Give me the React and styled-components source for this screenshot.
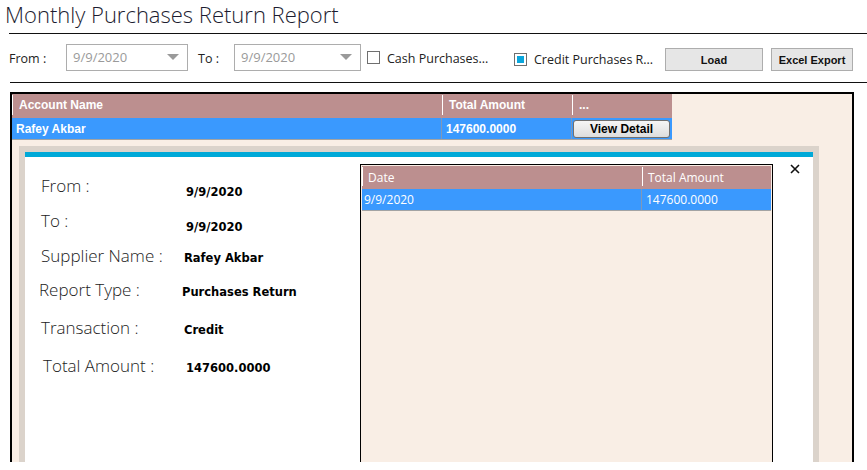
import React from "react";
import styled, { createGlobalStyle } from "styled-components";

const Global = createGlobalStyle`
  html, body { margin: 0; padding: 0; background: #fff; overflow: hidden; }
  body { width: 867px; height: 470px; }
`;

const Page = styled.div`
  width: 867px;
  height: 470px;
  overflow: hidden;
  font-family: "Open Sans", "Noto Sans", sans-serif;
  color: #222;
`;

const Title = styled.h1`
  margin: 0;
  padding: 0 0 0 5px;
  height: 33px;
  line-height: 28px;
  font-family: "Open Sans", sans-serif;
  font-weight: 300;
  font-size: 22px;
  color: #1c1c30;
  white-space: nowrap;
`;

const Rule = styled.div`
  margin-left: ${(p) => p.$left}px;
  border-top: 1px solid #111;
`;

const Toolbar = styled.div`
  height: 48px;
  display: flex;
  align-items: center;
  padding-left: 9px;
  font-size: 12.5px;
  color: #222;
`;

const FieldLabel = styled.span`
  width: ${(p) => p.$w}px;
  margin-left: ${(p) => p.$ml || 0}px;
  white-space: nowrap;
  margin-top: 1px;
`;

const DateBox = styled.div`
  width: ${(p) => p.$w}px;
  height: 27px;
  box-sizing: border-box;
  border: 1px solid #adadad;
  background: #fff;
  display: flex;
  align-items: center;
  justify-content: space-between;
  padding: 0 8px 0 6px;
  color: #9a9a9a;
  font-size: 13px;
  margin-top: -2px;
`;

const Arrow = styled.span`
  width: 0;
  height: 0;
  border-left: 6px solid transparent;
  border-right: 6px solid transparent;
  border-top: 6px solid #9a9a9a;
`;

const Check = styled.span`
  width: 13px;
  height: 13px;
  box-sizing: border-box;
  border: 1px solid #6f6f6f;
  background: #fff;
  margin-left: ${(p) => p.$ml}px;
  margin-right: 7px;
  padding: 2px;
  margin-top: ${(p) => p.$mt || 0}px;
  display: flex;
`;

const CheckFill = styled.span`
  flex: 1;
  background: #0aa6dc;
`;

const CheckLabel = styled.span`
  width: ${(p) => p.$w}px;
  white-space: nowrap;
  overflow: hidden;
  margin-top: ${(p) => p.$mt || 0}px;
`;

const ToolButton = styled.button`
  width: ${(p) => p.$w}px;
  height: 23px;
  margin-left: ${(p) => p.$ml || 0}px;
  margin-top: 3px;
  border: 1px solid #adadad;
  background: #e6e6e6;
  font-family: "Liberation Sans", Arial, sans-serif;
  font-weight: bold;
  font-size: 11px;
  color: #111;
  padding: 0;
`;

const Panel = styled.div`
  margin: 9px 0 0 10px;
  width: 844px;
  height: 370px;
  box-sizing: border-box;
  border: 2px solid #000;
  border-bottom: none;
  background: #f9eee5;
  overflow: hidden;
`;

const Grid = styled.div`
  width: 660px;
  font-family: "Liberation Sans", Arial, sans-serif;
  font-size: 12px;
  font-weight: bold;
  color: #fff;
`;

const GridRow = styled.div`
  display: grid;
  grid-template-columns: ${(p) => p.$cols};
  height: ${(p) => p.$h}px;
  background: ${(p) => p.$bg};
  border-bottom: ${(p) => (p.$line ? "1px solid #a3a3a3" : "none")};
  box-sizing: border-box;
`;

const HeadCell = styled.div`
  border-left: 1px solid #fff;
  padding: ${(p) => (p.$light ? "2px 0 0 5px" : "3px 0 0 6px")};
  margin: 1px 0 3px;
  white-space: nowrap;
  font-weight: ${(p) => (p.$light ? "normal" : "bold")};
`;

const Cell = styled.div`
  display: flex;
  align-items: center;
  padding-left: ${(p) => p.$pl}px;
  border-right: ${(p) => (p.$sep ? "1px solid #7f98b8" : "none")};
  white-space: nowrap;
  font-weight: ${(p) => (p.$light ? "normal" : "bold")};
`;

const DetailButton = styled.button`
  width: 97px;
  height: 18px;
  margin-top: 1px;
  border: 1px solid #707070;
  border-radius: 3px;
  background: linear-gradient(#f6f6f6, #dddddd);
  font-family: "Liberation Sans", Arial, sans-serif;
  font-weight: bold;
  font-size: 12px;
  color: #000;
  padding: 0;
`;

const Popup = styled.div`
  margin: 6px 0 0 7px;
  width: 800px;
  height: 330px;
  box-sizing: border-box;
  border: 6px solid #dbd3cb;
  border-bottom: none;
  background: #fff;
  position: relative;
`;

const CyanBar = styled.div`
  height: 5px;
  background: #00a9d8;
`;

const PopupBody = styled.div`
  display: flex;
`;

const Info = styled.div`
  width: 335px;
  padding-top: 17px;
`;

const InfoRow = styled.div`
  display: flex;
  align-items: flex-start;
  height: ${(p) => p.$h}px;
  padding-left: ${(p) => 16 + (p.$dx || 0)}px;
`;

const InfoLabel = styled.span`
  width: ${(p) => p.$w}px;
  font-family: "Open Sans", sans-serif;
  font-weight: 300;
  font-size: 17px;
  line-height: 23px;
  color: #222;
  white-space: nowrap;
`;

const InfoValue = styled.span`
  margin-top: ${(p) => p.$dy}px;
  font-family: "DejaVu Sans", sans-serif;
  font-weight: bold;
  font-size: 11.5px;
  line-height: 22px;
  color: #000;
  white-space: nowrap;
`;

const SubGrid = styled.div`
  margin-top: 7px;
  width: 413px;
  height: 320px;
  box-sizing: border-box;
  border: 1px solid #000;
  border-bottom: none;
  padding: 1px 1px 0;
  background: #f9eee5;
  font-family: "Open Sans", sans-serif;
  font-size: 12px;
  color: #fff;
`;

const Close = styled.div`
  position: absolute;
  right: 13px;
  top: 5px;
  width: 10px;
  height: 10px;
`;

const info = [
  { label: "From :", value: "9/9/2020", h: 35, dy: 7, dx: 0, vx: 0 },
  { label: "To :", value: "9/9/2020", h: 35, dy: 7, dx: 0, vx: 0 },
  { label: "Supplier Name :", value: "Rafey Akbar", h: 34, dy: 3, dx: 0, vx: -2 },
  { label: "Report Type :", value: "Purchases Return", h: 38, dy: 3, dx: -2, vx: -4 },
  { label: "Transaction :", value: "Credit", h: 38, dy: 3, dx: 0, vx: -2 },
  { label: "Total Amount :", value: "147600.0000", h: 38, dy: 3, dx: 2, vx: 0 },
];

export default function App() {
  return (
    <Page>
      <Global />
      <Title>Monthly Purchases Return Report</Title>
      <Rule $left={9} />
      <Toolbar>
        <FieldLabel $w={57}>From :</FieldLabel>
        <DateBox $w={122}>
          9/9/2020
          <Arrow />
        </DateBox>
        <FieldLabel $w={36} $ml={10}>To :</FieldLabel>
        <DateBox $w={127}>
          9/9/2020
          <Arrow />
        </DateBox>
        <Check $ml={6} $mt={-2} />
        <CheckLabel $w={127}>Cash Purchases...</CheckLabel>
        <Check $ml={0} $mt={2}>
          <CheckFill />
        </Check>
        <CheckLabel $w={131} $mt={3}>Credit Purchases R...</CheckLabel>
        <ToolButton $w={98}>Load</ToolButton>
        <ToolButton $w={82} $ml={8}>Excel Export</ToolButton>
      </Toolbar>
      <Rule $left={10} />
      <Panel>
        <Grid>
          <GridRow $cols="430px 130px 100px" $h={24} $bg="#bc8f8f">
            <HeadCell>Account Name</HeadCell>
            <HeadCell>Total Amount</HeadCell>
            <HeadCell>...</HeadCell>
          </GridRow>
          <GridRow $cols="430px 130px 100px" $h={22} $bg="#3a99fe" $line>
            <Cell $pl={4} $sep>Rafey Akbar</Cell>
            <Cell $pl={4} $sep>147600.0000</Cell>
            <Cell $pl={1}>
              <DetailButton>View Detail</DetailButton>
            </Cell>
          </GridRow>
        </Grid>
        <Popup>
          <CyanBar />
          <Close>
            <svg width="10" height="10" viewBox="0 0 10 10">
              <path d="M1 1 L9 9 M9 1 L1 9" stroke="#111" strokeWidth="1.6" />
            </svg>
          </Close>
          <PopupBody>
            <Info>
              {info.map((r) => (
                <InfoRow key={r.label} $h={r.h} $dx={r.dx}>
                  <InfoLabel $w={145 - r.dx + r.vx}>{r.label}</InfoLabel>
                  <InfoValue $dy={r.dy}>{r.value}</InfoValue>
                </InfoRow>
              ))}
            </Info>
            <SubGrid>
              <GridRow $cols="280px 130px" $h={23} $bg="#bc8f8f">
                <HeadCell $light>Date</HeadCell>
                <HeadCell $light>Total Amount</HeadCell>
              </GridRow>
              <GridRow $cols="280px 129px" $h={22} $bg="#3a99fe" $line>
                <Cell $pl={2} $sep $light>9/9/2020</Cell>
                <Cell $pl={4} $light>147600.0000</Cell>
              </GridRow>
            </SubGrid>
          </PopupBody>
        </Popup>
      </Panel>
    </Page>
  );
}
